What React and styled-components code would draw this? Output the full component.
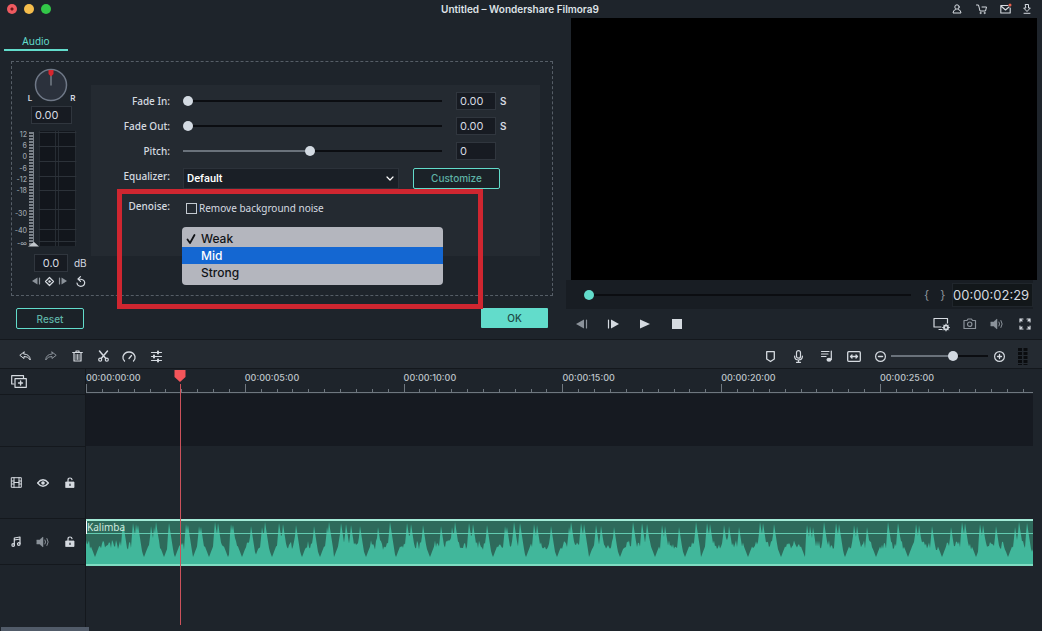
import React, { useState } from "react";
import styled, { createGlobalStyle } from "styled-components";

const c = {
  base: "#1e242b",
  raised: "#242a31",
  deep: "#161a21",
  line: "#14181d",
  field: "#171b22",
  fieldLine: "#30363e",
  text: "#d5dae0",
  muted: "#8b929a",
  accent: "#62dccb",
  accentDim: "#5fb3a6",
  red: "#cf2630",
};

const ui = `Inter, "Liberation Sans", sans-serif`;
const label = `"Noto Sans", "Open Sans", sans-serif`;

const GlobalStyle = createGlobalStyle`
  *, *::before, *::after { box-sizing: border-box; }
  body { margin: 0; background: ${c.base}; color: ${c.text}; font-family: ${ui}; font-size: 11px; overflow-x: hidden; }
  button, input, select { font: inherit; color: inherit; margin: 0; }
`;

/* ---------- Shared parts ---------- */

const Window = styled.div`
  min-height: 100vh;
  display: flex;
  flex-direction: column;
`;

const Glyph = styled.svg`
  display: block;
  fill: none;
  stroke: currentColor;
  stroke-width: 1.2;
  stroke-linecap: round;
  stroke-linejoin: round;
  overflow: visible;
`;

const IconButton = styled.button`
  display: flex;
  align-items: center;
  justify-content: center;
  width: ${(p) => p.$w || 16}px;
  height: 16px;
  padding: 0;
  border: 0;
  background: none;
  color: ${(p) => (p.$dim ? c.muted : c.text)};
`;

const Field = styled.input`
  width: ${(p) => p.$w}px;
  height: 18px;
  padding: 0 3px;
  border: 1px solid ${c.fieldLine};
  background: ${c.field};
  font-size: 11px;
  text-align: ${(p) => (p.$center ? "center" : "left")};
`;

const Range = styled.input`
  appearance: none;
  flex: 1;
  min-width: 0;
  width: 0;
  height: 12px;
  background: none;
  &::-webkit-slider-runnable-track {
    height: 2px;
    background: linear-gradient(to right, #6a727b var(--fill), #0b0d11 var(--fill));
  }
  &::-webkit-slider-thumb {
    appearance: none;
    width: 10px;
    height: 10px;
    margin-top: -4px;
    border-radius: 50%;
    border: 0;
    background: ${(p) => p.$thumb || "#d3dae2"};
  }
`;

function Slider({ start, name, thumb, id }) {
  const [value, setValue] = useState(start);
  return (
    <Range
      type="range"
      id={id}
      aria-label={name}
      $thumb={thumb}
      min="0"
      max="100"
      value={value}
      onChange={(e) => setValue(Number(e.target.value))}
      style={{ "--fill": `${value}%` }}
    />
  );
}

function Icon({ w = 14, h = 14, children }) {
  return (
    <Glyph width={w} height={h} viewBox={`0 0 ${w} ${h}`} aria-hidden="true">
      {children}
    </Glyph>
  );
}

/* ---------- Title bar ---------- */

const TitleBar = styled.header`
  display: grid;
  grid-template-columns: 1fr auto 1fr;
  align-items: center;
  height: 18px;
  padding: 0 9px 0 7px;
`;

const Lights = styled.div`
  display: flex;
  gap: 7px;
`;

const Light = styled.button`
  width: 10px;
  height: 10px;
  padding: 0;
  border: 0;
  border-radius: 50%;
  background: ${(p) => p.$fill};
`;

const Title = styled.h1`
  margin: 0;
  font-size: 10px;
  line-height: 18px;
  font-weight: 600;
  color: #dfe3e7;
`;

const TitleActions = styled.div`
  display: flex;
  justify-content: flex-end;
  gap: 8px;
`;

/* ---------- Audio panel ---------- */

const Upper = styled.main`
  display: grid;
  grid-template-columns: 566fr 476fr;
  border-bottom: 1px solid ${c.line};
`;

const AudioPanel = styled.section`
  display: flex;
  flex-direction: column;
  padding: 14px 13px 10px 4px;
  min-width: 0;
`;

const Tab = styled.button`
  align-self: flex-start;
  width: 64px;
  height: 19px;
  padding: 0;
  border: 0;
  border-bottom: 2px solid ${c.accent};
  background: none;
  color: ${c.accent};
  font-family: ${label};
  font-size: 10px;
  line-height: 16px;
`;

const Frame = styled.div`
  display: flex;
  margin: 10px 0 0 7px;
  height: 235px;
  border: 1px dashed #565e67;
  padding-right: 12px;
`;

const Mixer = styled.div`
  flex: none;
  width: 79px;
  display: flex;
  flex-direction: column;
  align-items: center;
  padding-top: 4px;
`;

const KnobRow = styled.div`
  display: flex;
  align-items: flex-end;
  gap: 2px;
  font-size: 8px;
  font-weight: 600;
  line-height: 8px;
  height: 40px;
  padding-bottom: 4px;
`;

const MeterBox = styled.div`
  align-self: flex-start;
  margin: 6px 0 0 1px;
`;

const DbRow = styled.label`
  display: flex;
  align-items: center;
  gap: 6px;
  align-self: flex-start;
  margin: 4px 0 0 22px;
  font-size: 10px;
`;

const KeyRow = styled.div`
  display: flex;
  align-self: flex-start;
  margin: 1px 0 0 18px;
  ${IconButton}:last-child { margin-left: 4px; }
`;

const Settings = styled.form`
  position: relative;
  flex: 1;
  min-width: 0;
  height: 171px;
  margin-top: 23px;
  padding-top: 3px;
  background: ${c.raised};
  font-family: ${label};
`;

const Row = styled.div`
  display: flex;
  align-items: center;
  height: ${(p) => (p.$tall ? 30 : 25)}px;
  padding-left: 1px;
`;

const Name = styled.label`
  flex: none;
  width: 78px;
  margin-right: 13px;
  padding-bottom: ${(p) => (p.$raised ? 4 : 0)}px;
  text-align: right;
  font-size: 10px;
  font-weight: 500;
`;

const ValueCell = styled.span`
  flex: none;
  width: 84px;
  margin-left: 14px;
  display: flex;
  align-items: center;
  gap: 4px;
  font-family: ${ui};
  font-size: 10px;
  font-weight: 600;
  ${Field} { font-weight: 400; }
`;

const Picker = styled.span`
  position: relative;
  flex: 1;
  min-width: 0;
  color: #fff;
  svg { position: absolute; right: 5px; top: 8px; pointer-events: none; }
`;

const Select = styled.select`
  appearance: none;
  width: 100%;
  height: 21px;
  padding: 0 3px;
  border: 1px solid #2c323a;
  background: #1a1f26;
  font-family: Roboto, ${ui};
  font-size: 11px;
  font-weight: 500;
`;

const OutlineButton = styled.button`
  flex: none;
  width: ${(p) => p.$w}px;
  height: 21px;
  padding: 0;
  border: 1px solid ${c.accent};
  border-radius: 2px;
  background: #1b2228;
  color: ${c.accentDim};
  font-family: ${ui};
  font-size: 10px;
  font-weight: 500;
`;

const PrimaryButton = styled.button`
  width: 67px;
  height: 20px;
  padding: 0;
  border: 0;
  border-radius: 1px;
  background: ${c.accent};
  color: #1d4a46;
  font-size: 10px;
  font-weight: 500;
`;

const Customize = styled(OutlineButton)`
  margin: 0 40px 0 14px;
`;

const CheckLabel = styled.label`
  display: flex;
  align-items: center;
  gap: 2px;
  font-size: 10px;
`;

const Check = styled.input`
  appearance: none;
  width: 11px;
  height: 11px;
  margin-left: 3px;
  border: 1px solid #c4cad1;
`;

const Highlight = styled.div`
  position: absolute;
  left: 26px;
  right: 57px;
  top: 104px;
  height: 120px;
  border: 5px solid ${c.red};
  pointer-events: none;
`;

const Menu = styled.div`
  position: absolute;
  left: 91px;
  right: 97px;
  top: 142px;
  padding: 3px 0 4px;
  border-radius: 4px;
  background: #b4b6be;
`;

const Option = styled.button`
  display: grid;
  grid-template-columns: 15px 1fr;
  align-items: center;
  width: 100%;
  height: 17px;
  padding: 0 4px;
  border: 0;
  text-align: left;
  background: ${(p) => (p.$active ? "#1467d2" : "transparent")};
  color: ${(p) => (p.$active ? "#fff" : "#111316")};
  font-family: ${ui};
  font-size: 12px;
  font-weight: 500;
`;

const PanelFooter = styled.footer`
  display: flex;
  justify-content: space-between;
  margin: 12px 5px 0 12px;
`;

const meterMarks = [
  ["12", 4], ["6", 15], ["0", 26], ["-6", 38], ["-12", 49],
  ["-18", 60], ["-30", 83], ["-40", 100], ["-∞", 113],
];

const MeterText = styled.text`
  font: 500 7px ${ui};
  fill: #9ba1a8;
  stroke: none;
  text-anchor: end;
`;

function Meter() {
  const lines = [2, 16, 31, 46, 60, 79, 99, 111];
  return (
    <Glyph width="64" height="120" viewBox="0 0 64 120" role="img" aria-label="Level meter">
      {meterMarks.map(([t, y]) => (
        <MeterText key={t} x="14" y={y + 3}>{t}</MeterText>
      ))}
      <path d="M18 2V116" stroke="#7a8189" strokeWidth="4" strokeDasharray="2 1" strokeLinecap="butt" />
      <path d="M20.5 2V116" stroke="#7a8189" strokeWidth="1" strokeLinecap="butt" />
      <rect x="26" y="1" width="37" height="115" fill="#12161c" stroke="none" />
      <path d="M26.5 1V116M42.5 1V116M45.5 1V116M62.5 1V116" stroke="#262c33" strokeWidth="1" />
      {lines.map((y) => (
        <path key={y} d={`M26 ${y + 0.5}H63`} stroke="#2c3239" strokeWidth="1" />
      ))}
      <path d="M15 116.5L21 112L26 116.5Z" fill="#c3c8cd" stroke="none" />
    </Glyph>
  );
}

function AudioSettings() {
  const [choice, setChoice] = useState("Weak");
  return (
    <Settings onSubmit={(e) => e.preventDefault()}>
      {[
        ["Fade In:", 0, "0.00", "S"],
        ["Fade Out:", 0, "0.00", "S"],
        ["Pitch:", 49, "0", ""],
      ].map(([name, start, value, unit]) => (
        <Row key={name}>
          <Name htmlFor={name}>{name}</Name>
          <Slider id={name} start={start} name={name} />
          <ValueCell>
            <Field $w={40} defaultValue={value} aria-label={`${name} value`} />
            {unit}
          </ValueCell>
        </Row>
      ))}
      <Row $tall>
        <Name $raised htmlFor="equalizer">Equalizer:</Name>
        <Picker>
          <Select id="equalizer" defaultValue="Default">
            <option>Default</option>
          </Select>
          <Icon w={8} h={5}><path d="M1 1L4 4L7 1" /></Icon>
        </Picker>
        <Customize type="button" $w={87}>Customize</Customize>
      </Row>
      <Row $tall>
        <Name $raised htmlFor="denoise">Denoise:</Name>
        <CheckLabel>
          <Check type="checkbox" id="denoise" />
          Remove background noise
        </CheckLabel>
      </Row>
      <Menu role="listbox" aria-label="Denoise level">
        {["Weak", "Mid", "Strong"].map((o) => (
          <Option
            key={o}
            type="button"
            role="option"
            aria-selected={choice === o}
            $active={o === "Mid"}
            onClick={() => setChoice(o)}
          >
            <span>
              {choice === o && (
                <Icon w={10} h={10}><path d="M1.500 5.500L4 9L8.500 1" strokeWidth="1.800" /></Icon>
              )}
            </span>
            {o}
          </Option>
        ))}
      </Menu>
      <Highlight />
    </Settings>
  );
}

/* ---------- Preview ---------- */

const Preview = styled.section`
  display: flex;
  flex-direction: column;
  min-width: 0;
`;

const Screen = styled.div`
  height: 262px;
  margin: 0 5px;
  background: #000;
`;

const Scrub = styled.div`
  display: flex;
  align-items: center;
  height: 29px;
  margin-right: 9px;
  padding-left: 18px;
  background: #181d23;
`;

const Braces = styled.span`
  display: flex;
  gap: 11px;
  width: 41px;
  padding-left: 13px;
  font-size: 12px;
  color: ${c.muted};
`;

const Timecode = styled.output`
  width: 81px;
  height: 24px;
  border: 1px solid #20262c;
  background: #12171a;
  font-size: 13px;
  line-height: 22px;
`;

const Transport = styled.div`
  display: flex;
  align-items: center;
  justify-content: space-between;
  height: 29px;
  padding: 0 9px 0 7px;
`;

const Cluster = styled.div`
  display: flex;
  align-items: center;
  gap: ${(p) => p.$gap}px;
`;

const Speaker = () => (
  <Icon w={14} h={12}>
    <path d="M1 4H3.500L7 1V11L3.500 8H1Z" fill="currentColor" strokeWidth=".5" />
    <path d="M9 4Q10.300 6 9 8M11 2.500Q13.500 6 11 9.500" strokeWidth="1" />
  </Icon>
);

/* ---------- Timeline ---------- */

const Toolbar = styled.div`
  display: flex;
  align-items: center;
  justify-content: space-between;
  height: 29px;
  padding: 4px 13px 0 17px;
  background: ${c.raised};
  border-bottom: 1px solid ${c.line};
`;

const Zoom = styled.div`
  display: flex;
  width: 97px;
  margin: 0 2px;
`;

const Timeline = styled.section`
  flex: 1;
  display: grid;
  grid-template-columns: 86px minmax(0, 1fr);
  padding-right: 9px;
`;

const Heads = styled.div`
  display: flex;
  flex-direction: column;
  border-right: 1px solid ${c.line};
`;

const Head = styled.div`
  display: flex;
  align-items: center;
  gap: 11px;
  height: ${(p) => p.$h}px;
  padding-left: 8px;
  border-bottom: 1px solid ${c.line};
`;

const Lanes = styled.div`
  position: relative;
  display: flex;
  flex-direction: column;
`;

const Ruler = styled.div`
  display: flex;
  height: 24px;
  overflow: hidden;
  border-bottom: 1px solid #6f777f;
`;

const Segment = styled.div`
  flex: none;
  width: 16.77%;
  display: flex;
  flex-direction: column;
  justify-content: space-between;
  font-size: 9px;
  font-weight: 500;
  line-height: 18px;
  color: #bfc4ca;
`;

const Ticks = styled.div`
  display: flex;
  align-items: flex-end;
  height: 8px;
  margin-top: -3px;
`;

const Tick = styled.i`
  flex: 1;
  height: ${(p) => (p.$major ? 8 : 3)}px;
  border-left: 1px solid #6f777f;
`;

const EmptyLane = styled.div`
  height: 52px;
  margin-top: 1px;
  background: ${c.deep};
`;

const Clip = styled.div`
  position: relative;
  height: 47px;
  margin-top: 73px;
  border-top: 2px solid #a3ead6;
  border-bottom: 2px solid #7fdcc2;
  background: #2e6a5b;
  svg { display: block; width: 100%; height: 43px; }
`;

const ClipName = styled.span`
  position: absolute;
  left: 0;
  top: 0;
  padding-left: 0;
  border-left: 1px solid #fff;
  font-family: ${label};
  font-size: 10px;
  line-height: 13px;
  color: #cfe9df;
`;

const Playhead = styled.div`
  position: absolute;
  left: 10%;
  top: 1px;
  bottom: 2px;
  width: 13px;
  margin-left: -7px;
  display: flex;
  flex-direction: column;
  align-items: center;
  color: #f4555a;
  &::after { content: ""; flex: 1; width: 1px; margin-top: 2px; background: #cc525b; }
`;

const ScrollBar = styled.div`
  height: 4px;
  width: 88px;
  margin-left: 1px;
  background: #515b69;
`;

const spikes = [
  37, 47, 50, 52, 65, 68, 70, 83, 100, 102, 113, 115, 129, 132, 145, 147, 165,
  176, 179, 193, 197, 210, 228, 241, 243, 255, 260, 265, 274, 292, 304, 321,
  325, 337, 355, 366, 369, 383, 387, 401, 419, 421, 428, 434, 448, 451, 465,
  483, 485, 495, 498, 510, 515, 528, 547, 556, 561, 576, 579, 593, 610, 621,
  624, 638, 643, 653, 674, 677, 688, 721, 724, 727, 738, 750, 753, 768, 771,
  781, 802, 812, 830, 833, 846, 865, 876, 879, 894, 897, 910, 929, 933, 941,
];
const dips = [
  9, 58, 78, 89, 107, 123, 142, 156, 169, 186, 216, 234, 248, 280, 310, 344,
  407, 440, 471, 503, 534, 569, 599, 615, 662, 695, 719, 759, 790, 822, 856,
  890, 922, 944,
];

function wavePath() {
  let seed = 11;
  const noise = () => {
    seed = (seed * 16807) % 2147483647;
    return seed / 2147483647;
  };
  let d = "M0 43";
  for (let x = 0; x <= 947; x += 1) {
    let y = 19 + noise() * 10;
    dips.forEach((p) => {
      const r = Math.abs(x - p);
      if (r < 5) y = Math.max(y, 36 - r * 2.6);
    });
    spikes.forEach((p, i) => {
      const r = x - p;
      const top = 1 + ((i * 7) % 6);
      if (r === -1) y = Math.min(y, top + 11);
      if (r >= 0 && r < 5) y = Math.min(y, top + r * 6.5);
    });
    d += `L${x} ${y.toFixed(1)}`;
  }
  return `${d}L947 43Z`;
}

const wave = wavePath();

const Lock = () => (
  <Icon w={10} h={11}>
    <rect x="1" y="5" width="8" height="5.500" fill="currentColor" strokeWidth=".8" />
    <path d="M3 5V3Q3 1 5 1Q6.800 1 7 2.600" />
    <path d="M5 7V8.500" stroke={c.base} />
  </Icon>
);

export default function App() {
  return (
    <Window>
      <GlobalStyle />
      <TitleBar>
        <Lights>
          <Light $fill="radial-gradient(circle, #6d1519 0 1px, #ee5a60 2px)" aria-label="Close" />
          <Light $fill="#f5bd4c" aria-label="Minimize" />
          <Light $fill="#32c748" aria-label="Zoom" />
        </Lights>
        <Title>Untitled – Wondershare Filmora9</Title>
        <TitleActions>
          <IconButton aria-label="Account">
            <Icon w={10} h={10}>
              <circle cx="5" cy="3" r="2.200" strokeWidth="1" />
              <path d="M3.500 5.500Q1 6 1 9H9Q9 6 6.500 5.500" strokeWidth="1" />
            </Icon>
          </IconButton>
          <IconButton aria-label="Store">
            <Icon w={11} h={10}>
              <path d="M.5 1H2.500L4 7H9.500L10.500 3H6" strokeWidth="1" />
              <circle cx="4.500" cy="9" r=".6" strokeWidth=".8" />
              <circle cx="8.500" cy="9" r=".6" strokeWidth=".8" />
            </Icon>
          </IconButton>
          <IconButton aria-label="Messages">
            <Icon w={11} h={10}>
              <path d="M8 1.500H.8V9H10.200V4M1 2L5.500 6L9 3" strokeWidth="1.100" />
              <circle cx="10" cy="1" r="1.500" fill="#e8604c" stroke="none" />
            </Icon>
          </IconButton>
          <IconButton $w={12} aria-label="Downloads">
            <Icon w={8} h={10}>
              <path d="M2.500 .5H5.500V4H7.300L4 7.500L.7 4H2.500ZM1 9.300H7" strokeWidth="1" />
            </Icon>
          </IconButton>
        </TitleActions>
      </TitleBar>

      <Upper>
        <AudioPanel>
          <Tab>Audio</Tab>
          <Frame>
            <Mixer>
              <KnobRow>
                L
                <Glyph width="34" height="34" viewBox="0 0 34 34" role="img" aria-label="Balance">
                  <circle cx="17" cy="17" r="15.500" fill="#2b313c" stroke="#6f7887" strokeWidth="1.500" />
                  <path d="M17 6V17" stroke="#747c86" strokeWidth="1.500" />
                  <path d="M14.500 2H19.500V6L17 8.500L14.500 6Z" fill="#d8262e" stroke="none" />
                </Glyph>
                R
              </KnobRow>
              <Field $w={41} defaultValue="0.00" aria-label="Balance value" />
              <MeterBox><Meter /></MeterBox>
              <DbRow>
                <Field $w={34} $center defaultValue="0.0" />
                dB
              </DbRow>
              <KeyRow>
                <IconButton $w={13} $dim aria-label="Previous keyframe">
                  <Icon w={9} h={8}><path d="M0 4L5.500 .5V7.500Z" fill="currentColor" stroke="none" /><path d="M7.500 1V7" /></Icon>
                </IconButton>
                <IconButton $w={13} aria-label="Add keyframe">
                  <Icon w={9} h={9}><path d="M4.500 .5L8.500 4.500L4.500 8.500L.5 4.500Z" /><circle cx="4.500" cy="4.500" r="1" fill="currentColor" strokeWidth=".5" /></Icon>
                </IconButton>
                <IconButton $w={13} $dim aria-label="Next keyframe">
                  <Icon w={9} h={8}><path d="M9 4L3.500 .5V7.500Z" fill="currentColor" stroke="none" /><path d="M1.500 1V7" /></Icon>
                </IconButton>
                <IconButton aria-label="Reset level">
                  <Icon w={10} h={11}><path d="M1 7Q1.500 10.300 4.800 10.300Q8.700 10 8.700 6.500Q8.500 3 2 3M4.500 .6L2 3L4.500 5.400" strokeWidth="1.200" /></Icon>
                </IconButton>
              </KeyRow>
            </Mixer>
            <AudioSettings />
          </Frame>
          <PanelFooter>
            <OutlineButton $w={68}>Reset</OutlineButton>
            <PrimaryButton>OK</PrimaryButton>
          </PanelFooter>
        </AudioPanel>

        <Preview>
          <Screen />
          <Scrub>
            <Slider start={0} name="Playback position" thumb={c.accent} />
            <Braces><span>{"{"}</span><span>{"}"}</span></Braces>
            <Timecode>00:00:02:29</Timecode>
          </Scrub>
          <Transport>
            <Cluster $gap={16}>
              <IconButton $dim aria-label="Previous frame">
                <Icon w={11} h={10}><path d="M0 5L8 .5V9.500Z" fill="currentColor" stroke="none" /><path d="M10.500 1V9" /></Icon>
              </IconButton>
              <IconButton aria-label="Next frame">
                <Icon w={11} h={10}><path d="M11 5L3 .5V9.500Z" fill="currentColor" stroke="none" /><path d="M.5 1V9" /></Icon>
              </IconButton>
              <IconButton aria-label="Play">
                <Icon w={10} h={10}><path d="M0 .5V9.500L10 5Z" fill="currentColor" stroke="none" /></Icon>
              </IconButton>
              <IconButton aria-label="Stop">
                <Icon w={10} h={10}><rect width="10" height="10" fill="currentColor" stroke="none" /></Icon>
              </IconButton>
            </Cluster>
            <Cluster $gap={12}>
              <IconButton aria-label="Display settings">
                <Icon w={17} h={14}>
                  <path d="M8 10H1V1.500H14.500V6M6 12.500H9" />
                  <circle cx="13" cy="10.500" r="2.200" strokeWidth="1.400" />
                  <path d="M13 7V14M9.500 10.500H16.500M10.600 8L15.400 13M15.400 8L10.600 13" strokeWidth=".9" />
                  <circle cx="13" cy="10.500" r="1" fill={c.base} stroke="none" />
                </Icon>
              </IconButton>
              <IconButton $dim aria-label="Snapshot">
                <Icon w={13} h={11}>
                  <path d="M1 2.500H4L5 1H8.500L9.500 2.500H12.500V10.500H1Z" />
                  <circle cx="6.700" cy="6.200" r="2.200" />
                </Icon>
              </IconButton>
              <IconButton $dim aria-label="Volume"><Speaker /></IconButton>
              <IconButton aria-label="Full screen">
                <Icon w={12} h={12}>
                  <path d="M1 4V1H4M8 1H11V4M11 8V11H8M4 11H1V8M1 1L3 3M11 1L9 3M11 11L9 9M1 11L3 9" />
                </Icon>
              </IconButton>
            </Cluster>
          </Transport>
        </Preview>
      </Upper>

      <Toolbar>
        <Cluster $gap={10}>
          <IconButton aria-label="Undo">
            <Icon w={12} h={10}><path d="M5 1L.8 4.300L5 7.500V5.500Q9 5 11.300 9Q11 3.300 5 3Z" strokeWidth="1" /></Icon>
          </IconButton>
          <IconButton $dim aria-label="Redo">
            <Icon w={12} h={10}><path d="M7 1L11.200 4.300L7 7.500V5.500Q3 5 .7 9Q1 3.300 7 3Z" strokeWidth="1" /></Icon>
          </IconButton>
          <IconButton aria-label="Delete">
            <Icon w={11} h={12}>
              <path d="M.7 2.500H10.300M4 2.300V1H7V2.300M2 3V11H9V3" />
              <path d="M4 4.500V9.500M5.500 4.500V9.500M7 4.500V9.500" strokeWidth=".8" />
            </Icon>
          </IconButton>
          <IconButton aria-label="Cut">
            <Icon w={11} h={12}>
              <path d="M1.500 1L7.800 8.500M9.500 1L3.200 8.500" strokeWidth="1.500" />
              <circle cx="2.200" cy="9.700" r="1.500" />
              <circle cx="8.800" cy="9.700" r="1.500" />
            </Icon>
          </IconButton>
          <IconButton aria-label="Speed">
            <Icon w={14} h={11}><path d="M2.500 10Q.5 8 1 5.500Q2.500 1 7 1Q11.500 1 13 5.500Q13.500 8 11.500 10M7 7.500L9.500 4.500" strokeWidth="1.300" /></Icon>
          </IconButton>
          <IconButton $w={18} aria-label="Adjust">
            <Icon w={11} h={11}>
              <path d="M.5 1.500H10.500M.5 5.500H10.500M.5 9.500H10.500" />
              <path d="M7 .5V2.500M3 4.500V6.500M7 8.500V10.500" strokeWidth="2" />
            </Icon>
          </IconButton>
        </Cluster>
        <Cluster $gap={12}>
          <IconButton aria-label="Marker">
            <Icon w={9} h={11}><path d="M.7 .7H8.300V8L4.500 10.500L.7 8Z" strokeWidth="1.300" /></Icon>
          </IconButton>
          <IconButton aria-label="Record voiceover">
            <Icon w={9} h={13}>
              <rect x="2.500" y=".7" width="4" height="7.500" rx="2" />
              <path d="M.6 6Q.6 10 4.500 10Q8.400 10 8.400 6M4.500 10V12.300M2.500 12.300H6.500" />
            </Icon>
          </IconButton>
          <IconButton aria-label="Audio mixer">
            <Icon w={11} h={12}>
              <path d="M.5 1.500H8M.5 4H7M.5 6.500H5M10.300 1V9.500" />
              <ellipse cx="8" cy="9.700" rx="2.500" ry="2" fill="currentColor" stroke="none" />
            </Icon>
          </IconButton>
          <IconButton aria-label="Fit timeline">
            <Icon w={14} h={11}>
              <rect x=".7" y=".7" width="12.600" height="9.600" rx="1" strokeWidth="1.300" />
              <path d="M3.500 5.500H10.500M5 4L3.500 5.500L5 7M9 4L10.500 5.500L9 7" strokeWidth="1.300" />
            </Icon>
          </IconButton>
          <Cluster $gap={3}>
            <IconButton $w={12} aria-label="Zoom out">
              <Icon w={11} h={11}><circle cx="5.500" cy="5.500" r="4.900" /><path d="M3.500 5.500H7.500" strokeWidth="1.500" /></Icon>
            </IconButton>
            <Zoom><Slider start={65} name="Timeline zoom" /></Zoom>
            <IconButton $w={12} aria-label="Zoom in">
              <Icon w={11} h={11}><circle cx="5.500" cy="5.500" r="4.900" /><path d="M3.500 5.500H7.500M5.500 3.500V7.500" strokeWidth="1.300" /></Icon>
            </IconButton>
          </Cluster>
          <IconButton $w={12} aria-label="Level meter">
            <Icon w={10} h={17}><path d="M2 0V17M7.500 0V17" stroke="#0a0c0f" strokeWidth="4" strokeDasharray="3 1" strokeLinecap="butt" /></Icon>
          </IconButton>
        </Cluster>
      </Toolbar>

      <Timeline>
        <Heads>
          <Head $h={26}>
            <IconButton $w={22} aria-label="Add track">
              <Icon w={16} h={13}>
                <path d="M3 9H.7V.7H12.500V3" />
                <rect x="4" y="3.700" width="11.300" height="8.600" />
                <path d="M7.500 8H11.500M9.600 6V10" strokeWidth="1.400" />
              </Icon>
            </IconButton>
          </Head>
          <Head $h={52} />
          <Head $h={72}>
            <IconButton aria-label="Video track">
              <Icon w={11} h={11}>
                <path d="M.7 .7H10.300V10.300H.7ZM3 .7V10.300M8 .7V10.300M.7 4H3M.7 7H3M8 4H10.300M8 7H10.300M3 5.500H8" strokeWidth="1" />
              </Icon>
            </IconButton>
            <IconButton aria-label="Show track">
              <Icon w={12} h={8}>
                <path d="M.6 4Q6 -2.500 11.400 4Q6 10.500 .6 4Z" strokeWidth="1.300" />
                <circle cx="6" cy="4" r="1.800" fill="currentColor" stroke="none" />
              </Icon>
            </IconButton>
            <IconButton aria-label="Lock video track"><Lock /></IconButton>
          </Head>
          <Head $h={46}>
            <IconButton aria-label="Audio track">
              <Icon w={10} h={11}>
                <path d="M3.300 9V2L9 1V7.500M3.300 4L9 3" />
                <circle cx="2.200" cy="9" r="1.300" />
                <circle cx="7.800" cy="8" r="1.300" />
              </Icon>
            </IconButton>
            <IconButton $dim aria-label="Mute track"><Speaker /></IconButton>
            <IconButton aria-label="Lock audio track"><Lock /></IconButton>
          </Head>
        </Heads>
        <Lanes>
          <Ruler>
            {["00", "05", "10", "15", "20", "25"].map((s) => (
              <Segment key={s}>
                00:00:{s}:00
                <Ticks>
                  {Array.from({ length: 10 }, (_, i) => <Tick key={i} $major={i === 0} />)}
                </Ticks>
              </Segment>
            ))}
          </Ruler>
          <EmptyLane />
          <Clip>
            <svg viewBox="0 0 947 43" preserveAspectRatio="none" role="img" aria-label="Kalimba waveform">
              <path d={wave} fill="#41b79b" />
              <path d="M0 12.500H947" stroke="#62cbb0" strokeWidth="1" />
            </svg>
            <ClipName>Kalimba</ClipName>
          </Clip>
          <Playhead>
            <Icon w={12} h={12}><path d="M.5 0H11.500V7L6 12L.5 7Z" fill="currentColor" stroke="none" /></Icon>
          </Playhead>
        </Lanes>
      </Timeline>
      <ScrollBar />
    </Window>
  );
}
